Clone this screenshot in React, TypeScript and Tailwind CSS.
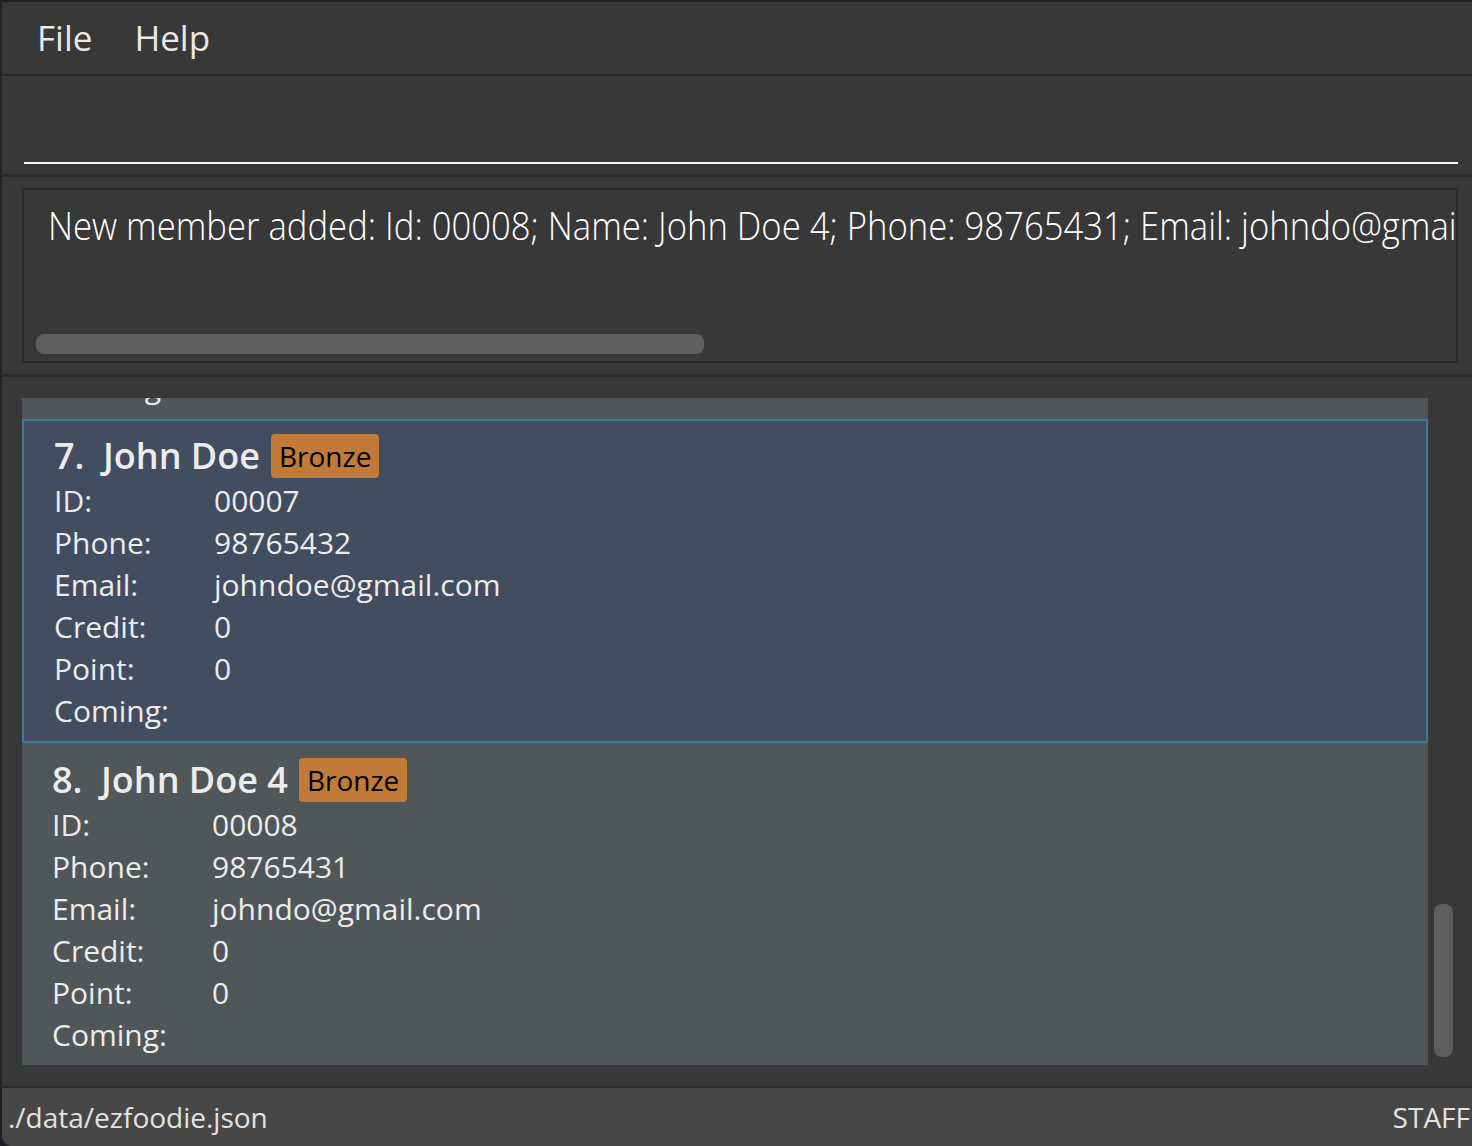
import React from "react";

const FONT = { fontFamily: '"Open Sans", "Noto Sans", sans-serif' };

function Row({ label, value }: { label: string; value: string }) {
  return (
    <div className="flex h-[42px] items-center text-[30px] text-[#ececec]">
      <div className="w-[160px] shrink-0">{label}</div>
      <div>{value}</div>
    </div>
  );
}

function Card({
  index,
  name,
  id,
  phone,
  email,
  selected,
}: {
  index: number;
  name: string;
  id: string;
  phone: string;
  email: string;
  selected?: boolean;
}) {
  return (
    <div
      className={
        selected
          ? "bg-[#424d5f] border-2 border-[#3b7c91] pl-[30px] pt-[12px] pb-[10px]"
          : "bg-[#515658] pl-[30px] pt-[14px] pb-[10px]"
      }
    >
      <div className="flex h-[46px] items-center">
        <span className="text-[36px] font-semibold text-[#ececec] w-[49px]">{index}.</span>
        <span className="text-[36px] font-semibold text-[#ececec]">{name}</span>
        <span className="ml-[11px] h-[44px] rounded-[4px] bg-[#c17a37] px-[8px] text-[28px] font-medium leading-[44px] text-black">
          Bronze
        </span>
      </div>
      <Row label="ID:" value={id} />
      <Row label="Phone:" value={phone} />
      <Row label="Email:" value={email} />
      <Row label="Credit:" value="0" />
      <Row label="Point:" value="0" />
      <Row label="Coming:" value="" />
    </div>
  );
}

export default function App() {
  return (
    <div className="h-[1146px] w-[1472px] overflow-hidden bg-[#1c2026]" style={FONT}>
      <div className="flex h-full w-full flex-col overflow-hidden rounded-bl-[12px] border-l-2 border-t-2 border-[#222222] bg-[#383838]">
        {/* Menu bar */}
        <div className="flex h-[74px] shrink-0 items-center gap-[42px] border-b-2 border-[#2b2b2b] pl-[35px] text-[35px] text-[#e8e8e8]">
          <span>File</span>
          <span>Help</span>
        </div>

        {/* Command box */}
        <div className="h-[101px] shrink-0 border-b-[3px] border-[#2b2b2b] pl-[22px] pr-[14px] pt-[86px]">
          <div className="h-[2px] bg-white" />
        </div>

        {/* Result display */}
        <div className="h-[200px] shrink-0 border-b-[3px] border-[#2b2b2b] pl-[20px] pr-[14px] pt-[11px]">
          <div className="relative h-[175px] overflow-hidden border-2 border-[#2a2a2a]">
            <div className="pl-[24px] pt-[9px]">
              <div className="inline-block origin-left scale-x-[0.912] whitespace-nowrap text-[38px] font-light leading-[52px] text-white">
                New member added: Id: 00008; Name: John Doe 4; Phone: 98765431; Email: johndo@gmail.com; Credit: 0
              </div>
            </div>
            <div className="absolute left-[12px] top-[144px] h-[20px] w-[668px] rounded-[8px] bg-[#5f5f5f]" />
          </div>
        </div>

        {/* List panel */}
        <div className="flex h-[709px] shrink-0 pl-[20px] pt-[21px]">
          <div className="w-[1406px] shrink-0">
            <div className="flex h-[21px] flex-col justify-end overflow-hidden bg-[#515658] pl-[32px] pb-[12px]">
              <div className="flex h-[42px] shrink-0 items-center text-[30px] text-[#ececec]">Coming:</div>
            </div>
            <Card index={7} name="John Doe" id="00007" phone="98765432" email="johndoe@gmail.com" selected />
            <Card index={8} name="John Doe 4" id="00008" phone="98765431" email="johndo@gmail.com" />
          </div>
          <div className="relative flex-1">
            <div className="absolute left-[6px] top-[506px] h-[153px] w-[19px] rounded-[8px] bg-[#5e5e5e]" />
          </div>
        </div>

        {/* Status bar */}
        <div className="flex flex-1 items-center justify-between border-t-2 border-[#2b2b2b] bg-[#474747] pl-[6px] pr-[2px] text-[28px] text-[#e2e2e2]">
          <span>./data/ezfoodie.json</span>
          <span>STAFF</span>
        </div>
      </div>
    </div>
  );
}
